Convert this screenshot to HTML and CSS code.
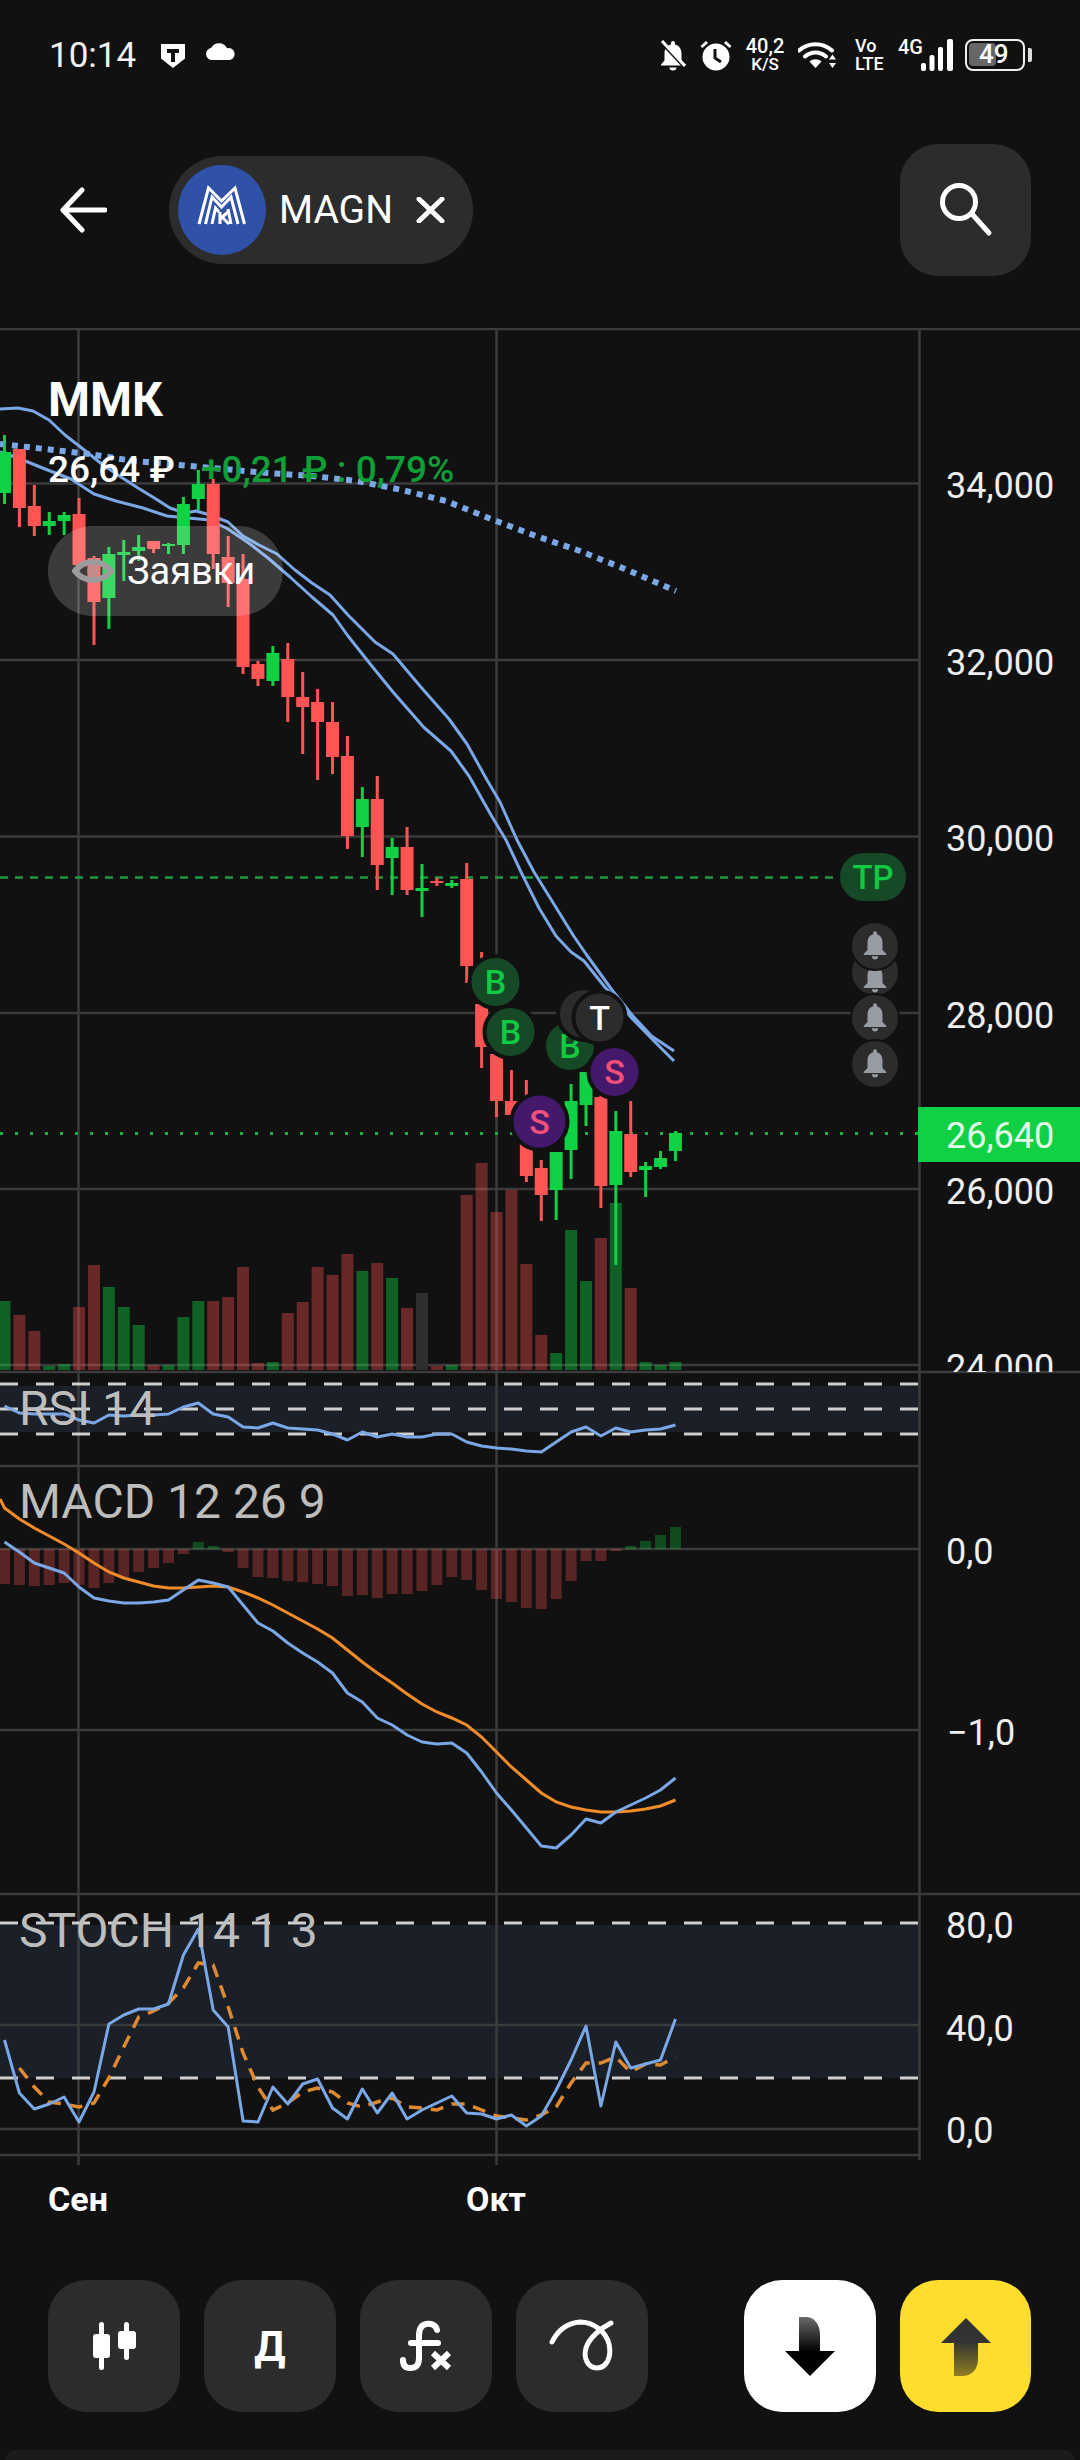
FILE: index.html
```html
<!DOCTYPE html>
<html lang="en">
<head>
  <meta charset="UTF-8">
  <meta name="viewport" content="width=device-width, initial-scale=1.0">
  <title>MAGN chart</title>
  <link rel="stylesheet" href="styles.css">
</head>
<body>
  <div class="status-bar">
    <span class="clock">10:14</span>
    <svg class="st-shield" width="26" height="25" viewBox="0 0 26 25">
      <path class="fill-white" d="M1 1h24v14.500L13 25 1 15.500z"/>
      <path class="fill-dark" d="M7 6h12v4h-4v9h-4v-9H7z"/>
    </svg>
    <svg class="st-cloud" width="30" height="17" viewBox="0 0 30 17">
      <path class="fill-white" d="M6 17a6 6 0 0 1-1-11.900A9 9 0 0 1 21 5.200 6 6 0 0 1 24 17z"/>
    </svg>
    <div class="status-right">
      <svg width="26" height="31" viewBox="0 0 26 31">
        <path class="fill-white" d="M13 1a2 2 0 0 1 2 2v1.500c4.500 1 6.500 5 6.500 9v7l3.500 4v1H1v-1l3.500-4v-7c0-4 2-8 6.500-9V3a2 2 0 0 1 2-2z"/>
        <path class="fill-white" d="M9.500 27.500h7a3.500 3 0 0 1-7 0z"/>
        <path class="line-dark" d="M0 1l26 28"/>
        <path class="line-white" d="M2 1l23 25"/>
      </svg>
      <svg width="32" height="32" viewBox="0 0 32 32">
        <circle class="fill-white" cx="16" cy="18" r="13.500"/>
        <path class="line-dark" d="M15 10v9l6 4"/>
        <path class="line-white" d="M1.500 8L7 3M30.500 8L25 3"/>
      </svg>
      <div class="speed"><span>40,2</span><span class="speed-unit">K/S</span></div>
      <svg class="st-wifi" width="38" height="29" viewBox="0 0 38 29">
        <path class="line-white thick" d="M1 10.500C10 2 25 2 34 10.500M7 16.500c6-5.500 15-5.500 21 0"/>
        <path class="fill-white" d="M11.500 21.500c3.500-3 8.500-3 12 0L17.500 28z"/>
        <path class="fill-white" d="M34.500 14.500l3.500 5h-7zM34.500 28l-3.500-5h7z"/>
      </svg>
      <div class="volte"><span>Vo</span><span>LTE</span></div>
      <span class="net">4G</span>
      <svg class="st-signal" width="32" height="32" viewBox="0 0 32 32">
        <rect class="fill-white" x="0" y="24" width="5" height="8" rx="2"/>
        <rect class="fill-white" x="8.500" y="16" width="5" height="16" rx="2"/>
        <rect class="fill-white" x="17" y="8" width="5" height="24" rx="2"/>
        <rect class="fill-white" x="26" y="0" width="6" height="32" rx="2"/>
      </svg>
      <div class="battery">
        <div class="battery-body"><div class="battery-level"></div><span class="battery-num">49</span></div>
        <div class="battery-tip"></div>
      </div>
    </div>
  </div>

  <div class="top-bar">
    <svg class="back" width="47" height="46" viewBox="0 0 47 46">
      <path class="line-white arrow" d="M22 3L3 23l19 20M3 23h42"/>
    </svg>
    <div class="ticker">
      <svg class="ticker-logo" width="88" height="90" viewBox="0 0 88 90">
        <ellipse class="logo-bg" cx="44" cy="45" rx="44" ry="45"/>
        <path class="logo-mark" d="M21 59L30.500 23 43.500 36 57 23 66.500 59"/>
        <path class="logo-mark" d="M27.500 59L34 32 43.500 42 53 32 60 59"/>
        <path class="logo-mark" d="M34 59L37.500 43 41 47"/>
        <path class="logo-mark" d="M53 59L50 44M42 47V59M42 54L50 47M44 52L51 59"/>
      </svg>
      <span class="ticker-name">MAGN</span>
      <svg class="ticker-x" width="29" height="26" viewBox="0 0 29 26">
        <path class="line-white arrow" d="M3 2l23 22M26 2L3 24"/>
      </svg>
    </div>
    <div class="icon-btn search-btn">
      <svg width="131" height="132" viewBox="0 0 131 132">
        <circle class="line-white arrow" cx="59" cy="58" r="16.500"/>
        <path class="line-white arrow" d="M72 70l17 19"/>
      </svg>
    </div>
  </div>

  <div class="chart-wrap">
    <svg id="chart" class="chart" width="1080" height="1892" viewBox="0 328 1080 1892">
      <defs>
        <clipPath id="mainPane"><rect x="0" y="328" width="1080" height="1044"/></clipPath>
        <symbol id="bell" viewBox="0 0 24 24">
          <path d="M12 1c-.9 0-1.500.7-1.500 1.500v.8C7.500 4 6 6.900 6 10v6l-3 3v1h18v-1l-3-3v-6c0-3.100-1.500-6-4.500-6.700v-.8C13.500 1.700 12.900 1 12 1zM9.500 21a2.500 2.500 0 0 0 5 0z"/>
        </symbol>
      </defs>

      <rect class="band" x="0" y="1386" width="919" height="46"/>
      <rect class="band" x="0" y="1925" width="919" height="153"/>

      <path class="grid" d="M0 329H1080M0 483.500H919M0 660H919M0 836.500H919M0 1013H919M0 1189H919M0 1365H919M0 1372H1080M0 1466H919M0 1549H919M0 1730H919M0 1894H1080M0 2025H919M0 2129H919M0 2155H919"/>
      <path class="grid" d="M78.500 329V2165M496.500 329V2165M919.500 329V2160"/>

      <path class="level" d="M0 1384H919M0 1409H919M0 1434H919M0 1923H919M0 2078H919"/>
      <path class="tp-line" d="M0 877.500H834"/>
      <path class="price-line" d="M0 1133.500H918"/>

      <g id="volume"></g>
      <g id="macdBars"></g>
      <g id="lines"></g>
      <g id="candles"></g>

      <g clip-path="url(#mainPane)">
        <text class="axis" x="946" y="498">34,000</text>
        <text class="axis" x="946" y="674.500">32,000</text>
        <text class="axis" x="946" y="851">30,000</text>
        <text class="axis" x="946" y="1027.500">28,000</text>
        <text class="axis" x="946" y="1203.500">26,000</text>
        <text class="axis" x="946" y="1380">24,000</text>
      </g>

      <rect class="price-tag" x="918" y="1107" width="162" height="55"/>
      <text class="axis price-tag-text" x="946" y="1148">26,640</text>

      <text class="axis" x="946" y="1564">0,0</text>
      <text class="axis" x="947" y="1745">−1,0</text>
      <text class="axis" x="946" y="1938">80,0</text>
      <text class="axis" x="946" y="2041">40,0</text>
      <text class="axis" x="946" y="2143">0,0</text>

      <text class="pane-title" x="19" y="1425">RSI 14</text>
      <text class="pane-title" x="19" y="1518">MACD 12 26 9</text>
      <text class="pane-title" x="19" y="1947">STOCH 14 1 3</text>

      <text class="month" x="78" y="2211">Сен</text>
      <text class="month" x="496" y="2211">Окт</text>

      <g class="marker buy"><circle cx="570" cy="1046" r="26"/><text x="570" y="1058">B</text></g>
      <g class="marker neutral"><circle cx="584" cy="1014" r="26"/></g>
      <g class="marker buy"><circle cx="495.500" cy="982" r="26"/><text x="495.500" y="994">B</text></g>
      <g class="marker buy"><circle cx="510.500" cy="1032" r="26"/><text x="510.500" y="1044">B</text></g>
      <g class="marker neutral"><circle cx="599.500" cy="1017.500" r="26"/><text x="599.500" y="1029.500">T</text></g>
      <g class="marker sell"><circle cx="614.500" cy="1072" r="26"/><text x="614.500" y="1084">S</text></g>
      <g class="marker sell"><circle cx="539.500" cy="1121.500" r="28"/><text x="539.500" y="1133.500">S</text></g>

      <rect class="tp-bg" x="840" y="853" width="66" height="48" rx="24"/>
      <text class="tp-text" x="873" y="889">TP</text>

      <g class="bell-group">
        <circle cx="875" cy="972" r="24"/><use href="#bell" x="860" y="963" width="30" height="30"/>
        <circle cx="875" cy="946" r="24"/><use href="#bell" x="860" y="930" width="30" height="30"/>
        <circle cx="875" cy="1018" r="24"/><use href="#bell" x="860" y="1002" width="30" height="30"/>
        <circle cx="875" cy="1064" r="24"/><use href="#bell" x="860" y="1048" width="30" height="30"/>
      </g>
    </svg>

    <div class="quote">
      <div class="quote-name">ММК</div>
      <div class="quote-row">
        <span class="quote-price">26,64 ₽</span>
        <span class="quote-change">+0,21 ₽ : 0,79%</span>
      </div>
      <div class="orders">
        <svg width="42" height="28" viewBox="0 0 42 28">
          <path class="eye" d="M3 14C12 2 30 2 39 14 30 26 12 26 3 14z"/>
          <circle class="eye-dot" cx="21" cy="14" r="6"/>
        </svg>
        <span>Заявки</span>
      </div>
    </div>
  </div>

  <div class="toolbar">
    <div class="icon-btn">
      <svg width="132" height="132" viewBox="0 0 132 132">
        <rect class="fill-white" x="51" y="42" width="5" height="48" rx="2.500"/>
        <rect class="fill-white" x="45" y="54" width="17" height="24" rx="3"/>
        <rect class="fill-white" x="76" y="42" width="5" height="38" rx="2.500"/>
        <rect class="fill-white" x="70" y="51" width="18" height="18" rx="3"/>
      </svg>
    </div>
    <div class="icon-btn period">Д</div>
    <div class="icon-btn">
      <svg width="132" height="132" viewBox="0 0 132 132">
        <path class="line-white fx" d="M77 50C76 45 71 43 66 44 61 45 59 50 59 56V78C59 86 55 88 50 88 45 88 43 85 43 80M51 63H78"/>
        <path class="line-white fx-x" d="M73 73L89 88M89 73L73 88"/>
      </svg>
    </div>
    <div class="icon-btn">
      <svg width="132" height="132" viewBox="0 0 132 132">
        <path class="line-white draw" d="M36 62C42 50 52 43 64 42 78 42 90 52 93 64 96 78 90 88 81 88 72 88 67 78 70 68 73 58 85 48 95 43"/>
      </svg>
    </div>
    <div class="icon-btn sell-btn">
      <svg width="132" height="132" viewBox="0 0 132 132">
        <defs><linearGradient id="downShaft" x1="0" y1="0" x2="0" y2="1"><stop offset="0" stop-color="#6a6a6a"/><stop offset="1" stop-color="#000"/></linearGradient></defs>
        <path fill="url(#downShaft)" d="M55 37H62C70 37 76 44 76 55V72H55z"/>
        <path d="M41 71H91L66 96z"/>
      </svg>
    </div>
    <div class="icon-btn buy-btn">
      <svg width="131" height="132" viewBox="0 0 131 132">
        <defs><linearGradient id="upShaft" x1="0" y1="0" x2="0" y2="1"><stop offset="0" stop-color="#333"/><stop offset="1" stop-color="#8f7f22"/></linearGradient></defs>
        <path fill="url(#upShaft)" d="M54 62H78V79C78 90 71 96 62 96H54z"/>
        <path fill="#333" d="M66 38L91 63H41z"/>
      </svg>
    </div>
  </div>

  <div class="bottom-strip"></div>

  <script src="chart.js"></script>
</body>
</html>
```

FILE: styles.css
```css
html, body {
  margin: 0;
  padding: 0;
}
body {
  width: 1080px;
  height: 2460px;
  overflow: hidden;
  background: #111111;
  color: #fff;
  font-family: 'Roboto', 'Noto Sans', sans-serif;
}

/* status bar */
.status-bar {
  display: flex;
  align-items: center;
  height: 110px;
  box-sizing: border-box;
  padding: 0 48px 0 49px;
}
.clock {
  font-size: 35px;
  font-weight: 400;
  width: 89px;
  color: #f2f2f2;
}
.st-shield {
  margin-left: 22px;
}
.st-cloud {
  margin-left: 20px;
  margin-top: -8px;
}
.status-right {
  display: flex;
  align-items: center;
  gap: 14px;
  margin-left: auto;
}
.speed, .volte {
  display: flex;
  flex-direction: column;
  align-items: center;
  font-weight: 500;
  line-height: 18px;
}
.speed {
  font-size: 20px;
  width: 38px;
}
.speed-unit {
  font-size: 17px;
}
.volte {
  font-size: 18px;
  align-items: flex-start;
  width: 29px;
  margin-left: 5px;
}
.st-wifi {
  margin-top: -2px;
}
.net {
  font-size: 20px;
  font-weight: 500;
  margin-top: -16px;
  margin-right: -16px;
}
.battery {
  display: flex;
  align-items: center;
  margin-left: -2px;
}
.battery-body {
  position: relative;
  width: 60px;
  height: 32px;
  box-sizing: border-box;
  border: 2.500px solid #f0f0f0;
  border-radius: 8px;
}
.battery-level {
  width: 27px;
  height: 23px;
  margin: 2px;
  background: #666;
  border-radius: 4px;
}
.battery-num {
  position: absolute;
  left: 12px;
  top: 0;
  font-size: 26px;
  line-height: 27px;
  font-weight: 500;
}
.battery-tip {
  width: 4px;
  height: 14px;
  margin-left: 3px;
  background: #ddd;
  border-radius: 0 2px 2px 0;
}

/* top bar */
.top-bar {
  display: flex;
  align-items: center;
  height: 218px;
  box-sizing: border-box;
  padding: 0 49px 18px 60px;
}
.ticker {
  display: flex;
  align-items: center;
  height: 108px;
  margin-left: 62px;
  padding: 0 28px 0 9px;
  background: #2c2c2c;
  border-radius: 54px;
}
.ticker-name {
  font-size: 39px;
  font-weight: 400;
  margin-left: 13px;
}
.ticker-x {
  margin-left: 23px;
}
.icon-btn {
  display: flex;
  align-items: center;
  justify-content: center;
  width: 132px;
  height: 132px;
  background: #2c2c2c;
  border-radius: 38px;
}
.search-btn {
  margin-left: auto;
  width: 131px;
}

/* svg helpers */
.fill-white { fill: #fff; }
.fill-dark { fill: #111; }
.line-white { fill: none; stroke: #fff; stroke-width: 3; }
.line-white.thick { stroke-width: 4; stroke-linecap: round; }
.line-white.arrow { stroke-width: 5; stroke-linecap: round; stroke-linejoin: round; }
.line-white.fx { stroke-width: 6; stroke-linecap: round; }
.line-white.fx-x { stroke-width: 6; }
.line-white.draw { stroke-width: 5; stroke-linecap: round; }
.line-dark { fill: none; stroke: #111; stroke-width: 3; }
.logo-bg { fill: #2f52a8; }
.logo-mark { fill: none; stroke: #fff; stroke-width: 3; }

/* chart */
.chart-wrap {
  position: relative;
  height: 1892px;
}
.chart {
  display: block;
}
.band { fill: #1b1f28; }
.grid { stroke: #3b3b3b; stroke-width: 2.500; fill: none; }
.level { stroke: #cfcfcf; stroke-width: 3; stroke-dasharray: 18 18; fill: none; }
.tp-line { stroke: #1f9a3d; stroke-width: 2.500; stroke-dasharray: 8 7; }
.price-line { stroke: #19b043; stroke-width: 3; stroke-dasharray: 3 12; }
.axis {
  font-size: 36px;
  fill: #eeeeee;
}
.price-tag { fill: #0fd143; }
.price-tag-text { fill: #e2fbe9; }
.pane-title {
  font-size: 48px;
  fill: #bdbdbd;
}
.month {
  font-size: 34px;
  font-weight: 700;
  fill: #fff;
  text-anchor: middle;
}

.vol-up { fill: rgba(15, 209, 67, 0.42); }
.vol-down { fill: rgba(255, 82, 82, 0.37); }
.vol-flat { fill: #2e2e2e; }
.macd-up { fill: rgba(15, 209, 67, 0.3); }
.macd-down { fill: rgba(255, 82, 82, 0.3); }
.candle-up { fill: #0fd143; }
.candle-down { fill: #ff5454; }
.ma { fill: none; stroke: #7aa7e6; stroke-width: 3; stroke-linejoin: round; }
.ma-dotted { fill: none; stroke: #7aa7e6; stroke-width: 6; stroke-dasharray: 6 6; }
.signal { fill: none; stroke: #f28c28; stroke-width: 3; }
.signal-dashed { fill: none; stroke: #e08a30; stroke-width: 3.500; stroke-dasharray: 13 9; }

.marker circle { stroke: #111; stroke-width: 4; }
.marker text {
  font-size: 34px;
  font-weight: 500;
  text-anchor: middle;
}
.buy circle { fill: #164a26; }
.buy text { fill: #12c944; }
.sell circle { fill: #44196b; }
.sell text { fill: #f0507a; }
.neutral circle { fill: #2c2c2c; }
.neutral text { fill: #fff; }
.tp-bg { fill: #164a26; }
.tp-text {
  font-size: 33px;
  font-weight: 500;
  fill: #12c944;
  text-anchor: middle;
}
.bell-group circle { fill: #2c2c2c; stroke: #111; stroke-width: 2; }
.bell-group use { fill: #989ca3; }

/* quote overlay */
.quote {
  position: absolute;
  left: 48px;
  top: 44px;
}
.quote-name {
  font-size: 48px;
  font-weight: 700;
  line-height: 56px;
}
.quote-row {
  display: flex;
  gap: 26px;
  margin-top: 21px;
  font-size: 37px;
  line-height: 42px;
  font-weight: 500;
}
.quote-change {
  color: #0f9e38;
}
.orders {
  display: flex;
  align-items: center;
  width: 235px;
  height: 90px;
  box-sizing: border-box;
  margin-top: 35px;
  padding-left: 24px;
  gap: 13px;
  font-size: 38px;
  background: rgba(255, 255, 255, 0.18);
  border-radius: 45px;
}
.eye { fill: none; stroke: #9c9c9c; stroke-width: 6; }
.eye-dot { fill: #9c9c9c; opacity: 0.6; }

/* bottom toolbar */
.toolbar {
  display: flex;
  gap: 24px;
  margin-top: 60px;
  padding: 0 49px 0 48px;
}
.period {
  font-size: 42px;
  font-weight: 700;
}
.sell-btn {
  margin-left: auto;
  background: #fff;
}
.buy-btn {
  width: 131px;
  background: #ffdd2d;
}
.bottom-strip {
  height: 12px;
  margin: 38px 5px 0;
  background: #1b1b1b;
  border-radius: 10px 10px 0 0;
}
```

FILE: chart.js
```js
// price history for the chart, values are y positions in the page
const NS = "http://www.w3.org/2000/svg";
const step = 14.91;
const xOf = i => 4.5 + step * i;

function add(parent, tag, attrs) {
  const el = document.createElementNS(NS, tag);
  for (const k in attrs) el.setAttribute(k, attrs[k]);
  parent.appendChild(el);
  return el;
}

// [wick top, body top, body bottom, wick bottom, direction]
const candles = [
  [435, 452, 493, 504, "up"], [449, 449, 508, 527, "down"], [485, 506, 526, 536, "down"],
  [512, 521, 526, 535, "up"], [512, 515, 521, 535, "up"], [498, 514, 565, 566, "down"],
  [556, 558, 602, 645, "down"], [547, 554, 598, 629, "up"], [540, 552, 555, 581, "up"],
  [535, 547, 551, 561, "up"], [541, 541, 549, 553, "down"], [543, 544, 546, 554, "up"],
  [497, 504, 545, 554, "up"], [470, 484, 499, 510, "up"], [479, 484, 554, 569, "down"],
  [536, 557, 583, 607, "down"], [554, 579, 667, 674, "down"], [661, 664, 679, 686, "down"],
  [646, 653, 681, 686, "up"], [643, 659, 697, 722, "down"], [672, 697, 707, 754, "down"],
  [689, 702, 722, 780, "down"], [702, 722, 757, 774, "down"], [736, 756, 836, 849, "down"],
  [787, 799, 827, 857, "up"], [776, 799, 865, 890, "down"], [838, 847, 858, 895, "up"],
  [827, 847, 890, 895, "down"], [864, 888, 891, 917, "up"], [878, 881, 883, 886, "down"],
  [880, 883, 886, 888, "up"], [863, 879, 966, 983, "down"], [952, 1004, 1047, 1068, "down"],
  [1040, 1054, 1101, 1117, "down"], [1070, 1101, 1115, 1125, "down"], [1080, 1135, 1176, 1182, "down"],
  [1160, 1168, 1195, 1221, "down"], [1152, 1152, 1190, 1220, "up"], [1084, 1101, 1150, 1179, "up"],
  [1072, 1072, 1105, 1126, "up"], [1090, 1097, 1186, 1208, "down"], [1111, 1131, 1185, 1265, "up"],
  [1101, 1134, 1172, 1177, "down"], [1162, 1166, 1170, 1197, "up"], [1151, 1158, 1167, 1169, "up"],
  [1131, 1133, 1151, 1161, "up"]
];

const volume = [69, 55, 39, 4, 6, 63, 105, 83, 63, 45, 5, 5, 53, 69, 69, 73, 103, 7, 8, 57, 68, 103, 95,
  116, 99, 107, 92, 62, 77, 4, 5, 175, 207, 158, 180, 106, 35, 17, 140, 89, 132, 167, 82, 8, 5, 8];
const volumeDir = i => (i === 28 ? "flat" : candles[i][4]);
const volumeUp = [0, 3, 4, 7, 8, 9, 11, 12, 13, 18, 24, 26, 30, 37, 38, 39, 41, 43, 44, 45];

const macd = [35, 36, 37, 36, 34, 36, 39, 34, 29, 23, 19, 14, 5, -7, -3, 3, 19, 28, 29, 32, 33, 35, 37, 47,
  46, 49, 45, 45, 42, 36, 28, 31, 41, 50, 53, 59, 60, 50, 32, 12, 12, 2, -3, -8, -14, -22];

const rsi = [1406, 1413, 1414, 1414, 1414, 1420, 1423, 1415, 1416, 1415, 1415, 1414, 1407, 1403, 1414, 1417,
  1427, 1428, 1423, 1428, 1429, 1430, 1434, 1440, 1432, 1437, 1434, 1437, 1437, 1434, 1434, 1442, 1446,
  1448, 1449, 1451, 1452, 1442, 1432, 1427, 1436, 1428, 1432, 1430, 1429, 1425];

const macdLine = [1542, 1552, 1563, 1568, 1573, 1587, 1598, 1601, 1603, 1603, 1602, 1600, 1590, 1580, 1583, 1587,
  1605, 1623, 1631, 1643, 1653, 1662, 1673, 1693, 1702, 1718, 1725, 1735, 1742, 1744, 1743, 1753, 1772,
  1793, 1810, 1828, 1846, 1848, 1835, 1819, 1823, 1812, 1805, 1798, 1790, 1778];

const macdSignal = [1508, 1519, 1528, 1536, 1544, 1553, 1563, 1572, 1578, 1582, 1586, 1588, 1588, 1587, 1586, 1587,
  1592, 1598, 1605, 1613, 1621, 1629, 1638, 1650, 1662, 1673, 1683, 1694, 1704, 1712, 1718, 1725, 1737,
  1752, 1767, 1780, 1793, 1802, 1807, 1810, 1812, 1812, 1811, 1809, 1806, 1800];

const stoch = [2040, 2093, 2109, 2104, 2097, 2122, 2092, 2024, 2015, 2009, 2009, 2004, 1955, 1929, 2010, 2027,
  2121, 2122, 2087, 2104, 2084, 2079, 2108, 2119, 2089, 2113, 2093, 2119, 2110, 2103, 2096, 2113, 2114,
  2119, 2115, 2126, 2116, 2090, 2060, 2026, 2106, 2042, 2068, 2064, 2060, 2019];

const stochSignal = [null, 2068, 2087, 2102, 2104, 2107, 2103, 2078, 2047, 2017, 2011, 2003, 1988, 1963, 1965, 2007,
  2053, 2087, 2110, 2103, 2092, 2088, 2092, 2103, 2107, 2102, 2098, 2107, 2108, 2110, 2104, 2104, 2110,
  2116, 2118, 2120, 2115, 2107, 2083, 2063, 2063, 2057, 2072, 2064, 2065, 2057];

const maFast = "0,409 18,408 33,411 49,420 65,435 83,449 103,465 121,477 138,488 156,499 170,508 185,513 196,511 210,515 228,522 243,536 259,545 277,554 295,570 312,583 330,595 348,615 375,642 393,654 420,686 449,719 467,744 487,780 500,802 517,840 534,872 552,901 573,935 586,954 612,990 632,1015 651.500,1036 674,1051";
const maSlow = "0,452 18,458 45,469 71,479 94,494 116,501 143,508 167,516 188,518 210,520 228,529 250,544 268,558 290,577 312,597 333,615 348,636 371,665 393,692 424,727.500 451,751 469,776 491,815 506,840 521,872 539,908 556,936 571,952 584,961 604,986 632,1018.500 656,1043 674,1061";
const maLong = "0,444 45,449 89,454 134,461 179,465 223,469 268,473 312,476 357,481 402,490 446,501 491,519 536,536 580,551 625,569 676,591";

const toPoints = ys => ys.map((y, i) => (y === null ? null : xOf(i).toFixed(1) + "," + y)).filter(Boolean).join(" ");

const volGroup = document.getElementById("volume");
volume.forEach((h, i) => {
  const dir = volumeDir(i) === "flat" ? "flat" : (volumeUp.includes(i) ? "up" : "down");
  add(volGroup, "rect", { x: xOf(i) - 6, y: 1370 - h, width: 12, height: h, class: "vol-" + dir });
});

const macdGroup = document.getElementById("macdBars");
macd.forEach((d, i) => {
  const h = Math.abs(d);
  add(macdGroup, "rect", {
    x: xOf(i) - 5.5, y: d < 0 ? 1549 - h : 1549, width: 11, height: h,
    class: d < 0 ? "macd-up" : "macd-down"
  });
});

const lines = document.getElementById("lines");
add(lines, "polyline", { points: maLong, class: "ma-dotted" });
add(lines, "polyline", { points: maFast, class: "ma" });
add(lines, "polyline", { points: maSlow, class: "ma" });
add(lines, "polyline", { points: toPoints(rsi), class: "ma" });
add(lines, "polyline", { points: "0,1499 " + toPoints(macdSignal), class: "signal" });
add(lines, "polyline", { points: toPoints(macdLine), class: "ma" });
add(lines, "polyline", { points: toPoints(stochSignal), class: "signal-dashed" });
add(lines, "polyline", { points: toPoints(stoch), class: "ma" });

const candleGroup = document.getElementById("candles");
candles.forEach((c, i) => {
  const [wickTop, bodyTop, bodyBottom, wickBottom, dir] = c;
  const x = xOf(i);
  add(candleGroup, "rect", { x: x - 1.5, y: wickTop, width: 3, height: wickBottom - wickTop, class: "candle-" + dir });
  add(candleGroup, "rect", { x: x - 6.5, y: bodyTop, width: 13, height: bodyBottom - bodyTop, class: "candle-" + dir });
});
```
